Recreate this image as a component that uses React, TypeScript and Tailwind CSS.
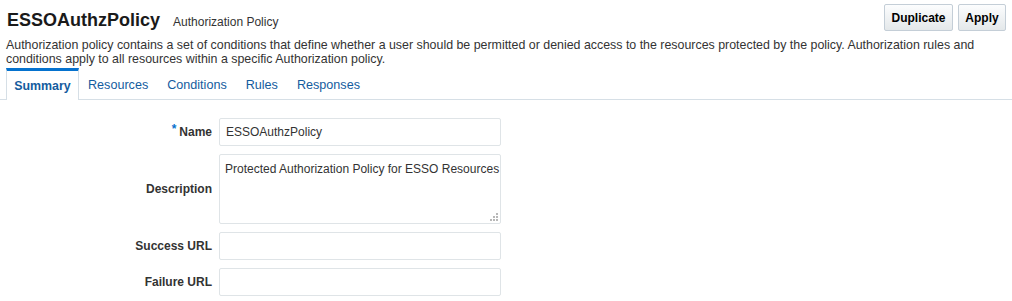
import React from "react";

const font = { fontFamily: '"Liberation Sans", Arial, sans-serif' };

function Field({ label, required, children, className = "" }: { label: string; required?: boolean; children: React.ReactNode; className?: string }) {
  return (
    <div className={`flex items-center ${className}`}>
      <div className="w-[212px] text-right text-[12px] font-bold text-[#333333] pr-0">
        {required && <span className="text-[#0572ce] mr-[3px] relative top-[-3px]">*</span>}
        {label}
      </div>
      <div className="ml-[7px]">{children}</div>
    </div>
  );
}

export default function App() {
  return (
    <div className="w-[1012px] h-[301px] bg-white overflow-hidden text-[#333333]" style={font}>
      <div className="flex items-start justify-between pl-[7px] pr-[6px]">
        <div className="flex items-baseline pt-[9px]">
          <span className="text-[18px] leading-[22px] font-bold text-[#1a1a1a]">ESSOAuthzPolicy</span>
          <span className="ml-[13px] text-[12px] text-[#333333]">Authorization Policy</span>
        </div>
        <div className="flex gap-[5px] pt-[4px]">
          <button className="h-[27px] w-[69px] rounded-[2px] border border-[#c4ced7] bg-gradient-to-b from-[#fcfdfe] to-[#e4e8ea] text-[12px] font-bold text-[#000]">Duplicate</button>
          <button className="h-[27px] w-[48px] rounded-[2px] border border-[#c4ced7] bg-gradient-to-b from-[#fcfdfe] to-[#e4e8ea] text-[12px] font-bold text-[#000]">Apply</button>
        </div>
      </div>
      <p className="pl-[6px] pr-[20px] mt-[7px] text-[12.4px] leading-[14px] text-[#333333]">
        Authorization policy contains a set of conditions that define whether a user should be permitted or denied access to the resources protected by the policy. Authorization rules and conditions apply to all resources within a specific Authorization policy.
      </p>
      <div className="mt-[2px] flex border-b border-[#d6dfe6] pl-[6px]">
        <div className="h-[32px] w-[73px] border-t-[3px] border-t-[#0572ce] border-x border-x-[#d6dfe6] bg-white -mb-px flex items-center justify-center pt-[1px] text-[12.4px] font-bold text-[#145c9e]">
          Summary
        </div>
        <div className="flex items-center pt-[3px] text-[12.6px] text-[#145c9e]">
          <span className="ml-[9px]">Resources</span>
          <span className="ml-[19px]">Conditions</span>
          <span className="ml-[19px]">Rules</span>
          <span className="ml-[19px]">Responses</span>
        </div>
      </div>
      <div className="mt-[18px]">
        <Field label="Name" required>
          <div className="h-[28px] w-[282px] rounded-[2px] border border-[#dfe4e7] flex items-center px-[6px] text-[12px] text-[#333333]">ESSOAuthzPolicy</div>
        </Field>
        <Field label="Description" className="mt-[8px]">
          <div className="relative h-[70px] w-[282px] rounded-[2px] border border-[#dfe4e7] pl-[5px] pt-[5px] text-[12px] text-[#333333] whitespace-nowrap">
            Protected Authorization Policy for ESSO Resources
            <svg className="absolute right-[1px] bottom-[1px]" width="10" height="10" viewBox="0 0 10 10">
              <rect x="7" y="1" width="2" height="2" fill="#b8b8b8" />
              <rect x="4" y="4" width="2" height="2" fill="#b8b8b8" />
              <rect x="7" y="4" width="2" height="2" fill="#b8b8b8" />
              <rect x="1" y="7" width="2" height="2" fill="#b8b8b8" />
              <rect x="4" y="7" width="2" height="2" fill="#b8b8b8" />
              <rect x="7" y="7" width="2" height="2" fill="#b8b8b8" />
            </svg>
          </div>
        </Field>
        <Field label="Success URL" className="mt-[8px]">
          <div className="h-[28px] w-[282px] rounded-[2px] border border-[#dfe4e7]" />
        </Field>
        <Field label="Failure URL" className="mt-[8px]">
          <div className="h-[28px] w-[282px] rounded-[2px] border border-[#dfe4e7]" />
        </Field>
      </div>
    </div>
  );
}
